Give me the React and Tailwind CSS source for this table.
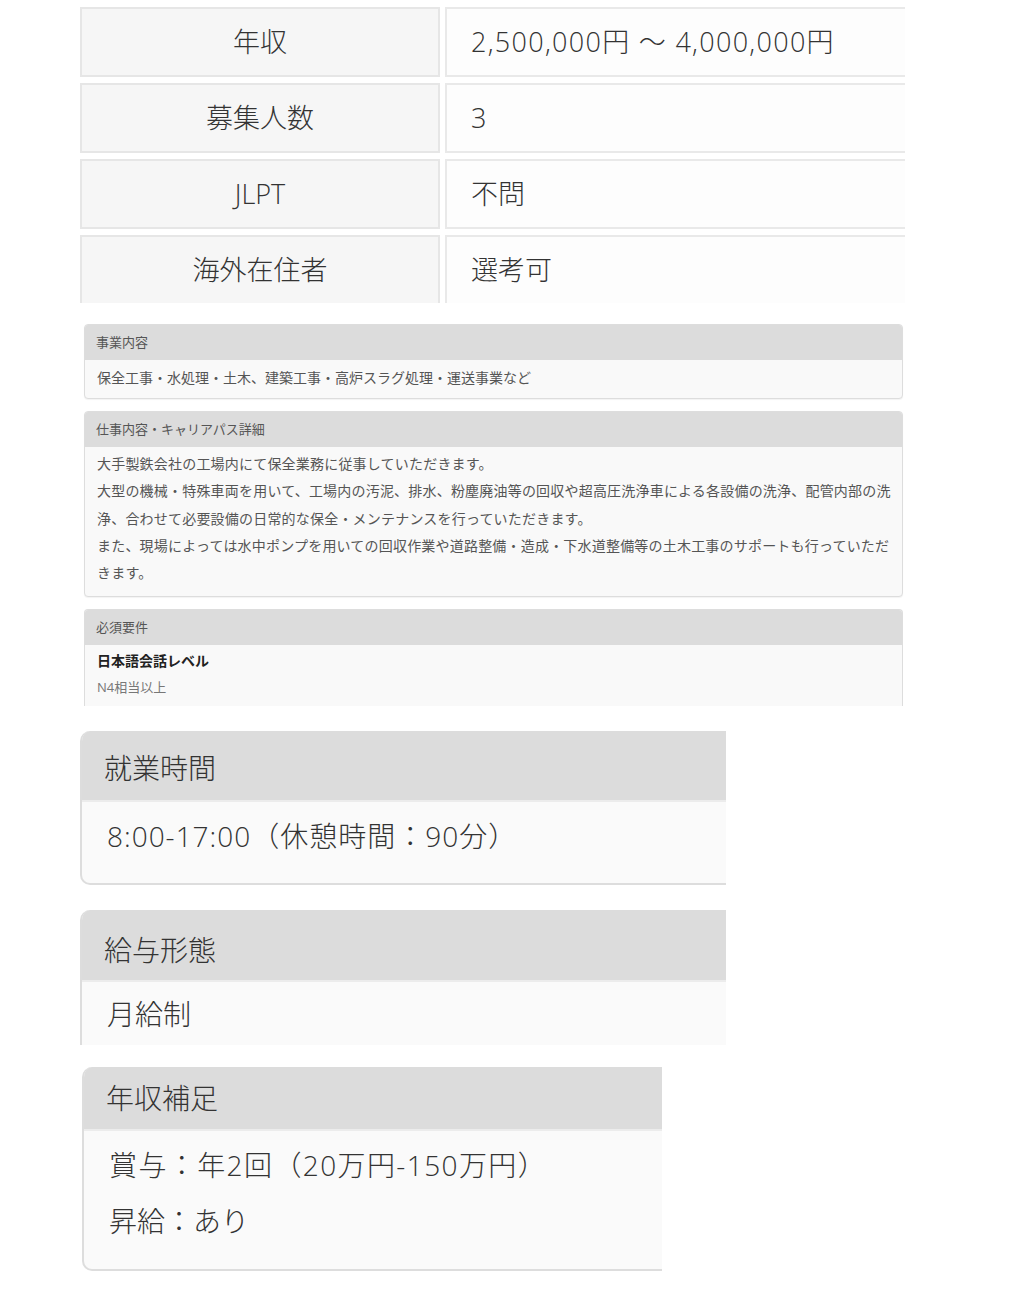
import React from 'react';

const font = { fontFamily: '"Open Sans", "Noto Sans CJK JP", sans-serif' };

const rows = [
    { label: '年収', value: '2,500,000円 ～ 4,000,000円', wide: true },
    { label: '募集人数', value: '3' },
    { label: 'JLPT', value: '不問' },
    { label: '海外在住者', value: '選考可' },
];

function InfoTable() {
    return (
        <div className="flex flex-col gap-[6px] pl-[80px] pt-[7px]">
            {rows.map((row, i) => {
                const last = i === rows.length - 1;
                return (
                    <div key={row.label} className={`flex gap-[5px] ${last ? 'h-[68px]' : 'h-[70px]'}`}>
                        <div className={`w-[360px] flex items-center justify-center bg-[#f6f6f6] border-[#e6e6e6] border-x-2 border-t-2 ${last ? '' : 'border-b-2'} text-[27px] font-light text-[#333]`}>
                            {row.label}
                        </div>
                        <div className={`w-[460px] flex items-center pl-[24px] bg-[#fdfdfd] border-[#e9e9e9] border-l-2 border-t-2 ${last ? '' : 'border-b-2'} text-[27px] font-light text-[#333] ${row.wide ? 'tracking-[1.3px]' : ''}`}>
                            {row.value}
                        </div>
                    </div>
                );
            })}
        </div>
    );
}

function SmallCard({ title, children, cut }) {
    return (
        <div className={`w-[819px] bg-[#f9f9f9] border border-[#dddddd] rounded-t-[4px] ${cut ? 'border-b-0' : 'rounded-b-[4px] shadow-[0_1px_1px_rgba(0,0,0,0.05)]'}`}>
            <div className="h-[35px] bg-[#dcdcdc] rounded-t-[3px] flex items-center px-[11px] text-[13px] text-[#555]">
                {title}
            </div>
            {children}
        </div>
    );
}

function SmallCards() {
    return (
        <div className="flex flex-col gap-[12px] pl-[84px] mt-[21px]">
            <SmallCard title="事業内容">
                <div className="h-[38px] px-[12px] flex items-center pb-[3px] text-[14px] text-[#555]">
                    保全工事・水処理・土木、建築工事・高炉スラグ処理・運送事業など
                </div>
            </SmallCard>
            <SmallCard title="仕事内容・キャリアパス詳細">
                <div className="px-[12px] pt-[3px] pb-[10px] text-[14px] leading-[27.3px] text-[#555] whitespace-nowrap tracking-[0.2px]">
                    大手製鉄会社の工場内にて保全業務に従事していただきます。<br />
                    大型の機械・特殊車両を用いて、工場内の汚泥、排水、粉塵廃油等の回収や超高圧洗浄車による各設備の洗浄、配管内部の洗<br />
                    浄、合わせて必要設備の日常的な保全・メンテナンスを行っていただきます。<br />
                    また、現場によっては水中ポンプを用いての回収作業や道路整備・造成・下水道整備等の土木工事のサポートも行っていただ<br />
                    きます。
                </div>
            </SmallCard>
            <SmallCard title="必須要件" cut>
                <div className="h-[61px] px-[12px] pt-[2px] text-[14px] leading-[27px]">
                    <div className="font-bold text-[#222]">日本語会話レベル</div>
                    <div className="text-[13px] text-[#777]">N4相当以上</div>
                </div>
            </SmallCard>
        </div>
    );
}

function BigCard({ title, width, headerH, headerPad = '', children, cut, className = '' }) {
    return (
        <div className={`${width} bg-[#fafafa] border-l-2 border-[#dddddd] rounded-tl-[10px] overflow-hidden ${cut ? '' : 'border-b-2 rounded-bl-[10px]'} ${className}`}>
            <div className={`${headerH} ${headerPad} bg-[#dcdcdc] border-b-2 border-[#ececec] flex items-center px-[22px] text-[28px] font-light text-[#333]`}>
                {title}
            </div>
            {children}
        </div>
    );
}

function BigCards() {
    return (
        <div className="flex flex-col pl-[80px] mt-[25px] pb-[46px]">
            <BigCard title="就業時間" width="w-[646px]" headerH="h-[71px]" headerPad="pt-[5px]">
                <div className="h-[81px] flex items-center px-[25px] text-[28px] font-light text-[#333] pb-[14px] tracking-[1px]">
                    8:00-17:00（休憩時間：90分）
                </div>
            </BigCard>
            <BigCard title="給与形態" width="w-[646px]" headerH="h-[72px]" headerPad="pt-[10px]" cut className="mt-[25px]">
                <div className="h-[63px] flex items-center px-[25px] text-[28px] font-light text-[#333]">
                    月給制
                </div>
            </BigCard>
            <BigCard title="年収補足" width="w-[580px]" headerH="h-[64px]" className="mt-[22px] ml-[2px]">
                <div className="h-[138px] px-[25px] pt-[6px] text-[28px] leading-[56px] font-light text-[#333]">
                    <div className="tracking-[1.4px]">賞与：年2回（20万円-150万円）</div>
                    <div>昇給：あり</div>
                </div>
            </BigCard>
        </div>
    );
}

export default function App() {
    return (
        <div className="w-[1017px] min-h-[1316px] bg-white" style={font}>
            <InfoTable />
            <SmallCards />
            <BigCards />
        </div>
    );
}
